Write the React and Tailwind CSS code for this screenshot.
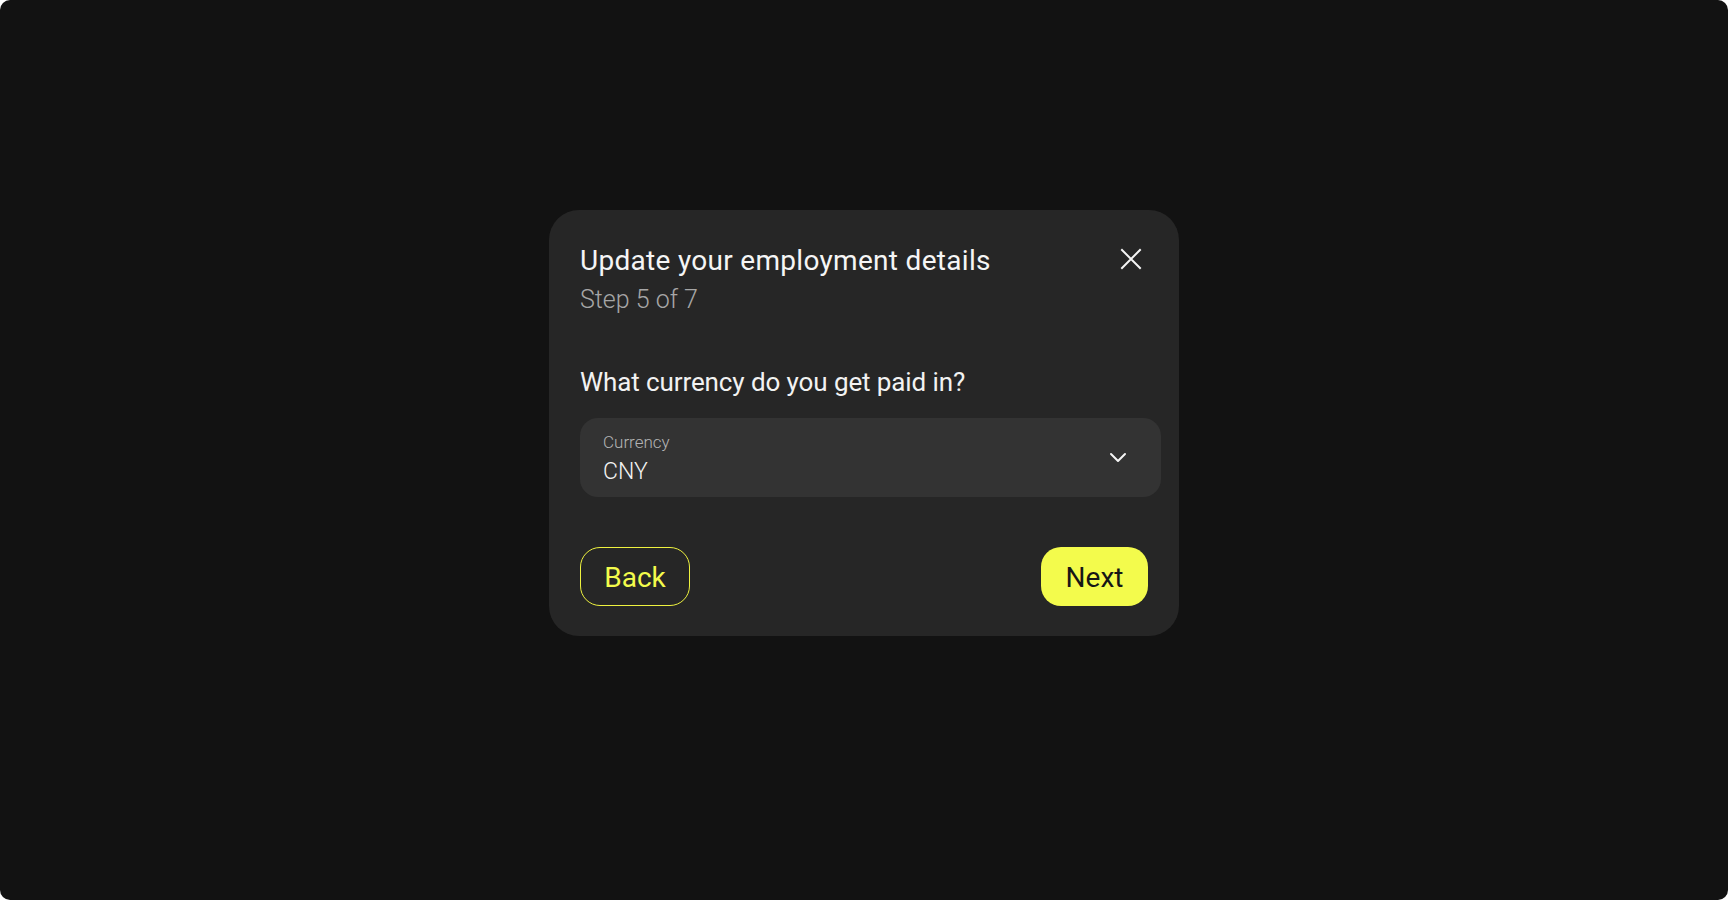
import React, { useState } from 'react';

const font = { fontFamily: 'Roboto, "Liberation Sans", sans-serif' };

function CloseIcon() {
  return (
    <svg width="22" height="22" viewBox="0 0 22 22" fill="none" stroke="#f5f5f5" strokeWidth="2" strokeLinecap="square">
      <path d="M2 2 L20 20 M20 2 L2 20" />
    </svg>
  );
}

function Chevron() {
  return (
    <svg width="18" height="11" viewBox="0 0 18 11" fill="none" stroke="#f5f5f5" strokeWidth="2" strokeLinecap="round" strokeLinejoin="round">
      <path d="M2 2 L9 9 L16 2" />
    </svg>
  );
}

export default function App() {
  const [currency] = useState('CNY');

  return (
    <div className="bg-white w-[1728px] h-[900px]" style={font}>
      <div className="h-[900px] w-full rounded-[10px] bg-[#121212] pt-[210px]">
        <div className="mx-auto w-[630px] rounded-[30px] bg-[#262626] pl-[31px] pr-[18px] pt-[35px] pb-[30px]">
          {/* header */}
          <div className="flex items-start justify-between pr-[19px]">
            <div>
              <h1 className="text-[28px] leading-[32px] font-normal tracking-[0.3px] text-[#f5f5f5]">
                Update your employment details
              </h1>
              <p className="mt-[7px] text-[25px] leading-[32px] font-light text-[#a6a6a6]">Step 5 of 7</p>
            </div>
            <button className="mt-[3px]">
              <CloseIcon />
            </button>
          </div>

          {/* question */}
          <h2 className="mt-[50px] text-[26px] leading-[32px] font-normal tracking-[-0.1px] text-[#f2f2f2]">
            What currency do you get paid in?
          </h2>

          <div className="mt-5 flex h-[79px] items-center justify-between rounded-[18px] bg-[#333333] pl-[23px] pr-[34px]">
            <div className="flex flex-col gap-[6px] pt-[2px]">
              <span className="text-[17px] leading-[20px] font-light text-[#b3b3b3]">Currency</span>
              <span className="text-[23px] leading-[28px] font-light text-[#f2f2f2]">{currency}</span>
            </div>
            <Chevron />
          </div>

          {/* actions */}
          <div className="mt-[50px] flex items-center justify-between pr-[13px]">
            <button className="flex h-[59px] w-[110px] items-center justify-center rounded-[20px] border-[1.5px] border-[#eef23f] pt-[2px] text-[28px] font-normal text-[#f3fb4c]">
              Back
            </button>
            <button className="flex h-[59px] w-[107px] items-center justify-center rounded-[20px] bg-[#f3fb4c] pt-[2px] text-[28px] font-normal text-[#161616]">
              Next
            </button>
          </div>
        </div>
      </div>
    </div>
  );
}
